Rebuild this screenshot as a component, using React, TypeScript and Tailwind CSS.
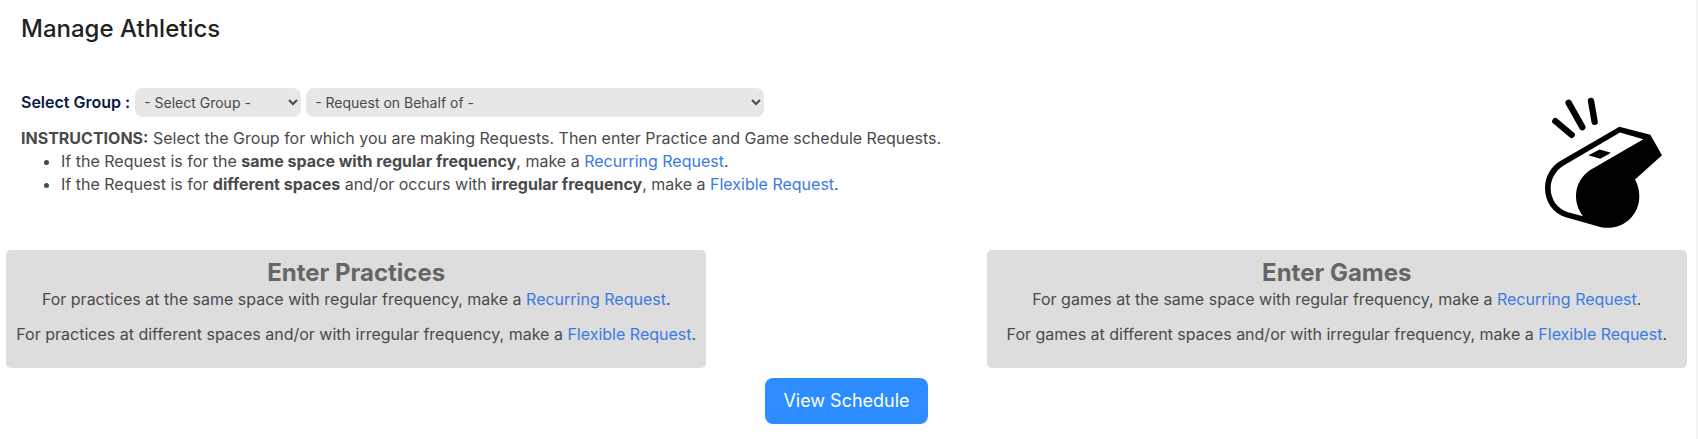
import { useState } from "react";

interface RequestCardProps {
  title: string;
  kind: string;
}

function RequestLink({ children }: { children: string }) {
  return (
    <a href="#" className="text-[#3b7ae4] hover:underline">
      {children}
    </a>
  );
}

function WhistleIcon() {
  return (
    <svg viewBox="75 52 351 392" className="w-[117px] h-[131px]" aria-hidden="true">
      {/* Sound lines */}
      <g stroke="#000" strokeWidth="19" strokeLinecap="round">
        <path d="M106 124 L155 165" />
        <path d="M146 69 L187 142" />
        <path d="M213 63 L224 126" />
      </g>
      {/* Body outline */}
      <path
        d="M298 141 L391 165 L426 226 L345 299 C353 314 358 331 358 349 C358 402 316 444 263 444 C253 444 242 442 233 439 L137 412 C100 400 75 366 75 325 C75 290 93 260 122 243 Z"
        fill="#000"
      />
      {/* Top face */}
      <path
        d="M300 158 L370 178 L212 270 C185 287 168 316 168 349 C168 371 176 392 189 409 L144 397 C113 388 92 359 92 325 C92 297 107 272 131 257 Z"
        fill="#fff"
      />
      <path d="M205 226 L239 209 L273 219 L241 237 Z" fill="#000" />
    </svg>
  );
}

function RequestCard({ title, kind }: RequestCardProps) {
  return (
    <section className="col-span-5 rounded-[5px] bg-[#ddd] pt-2 pb-[22px] text-center">
      <h2 className="text-2xl leading-[30px] font-bold text-[#666]">{title}</h2>
      <p className="mb-3">
        For {kind} at the same space with regular frequency, make a <RequestLink>Recurring Request</RequestLink>.
      </p>
      <p>
        For {kind} at different spaces and/or with irregular frequency, make a <RequestLink>Flexible Request</RequestLink>.
      </p>
    </section>
  );
}

export default function App() {
  const [group, setGroup] = useState("");
  const [behalf, setBehalf] = useState("");

  return (
    <main className="min-h-screen border-r-2 border-[#f2f2f2] bg-white pl-[6px] pr-[9px] font-['Inter',sans-serif] text-base leading-[23px] font-normal text-[#4a4a4a]">
      <h1 className="pt-[13px] pl-[15px] text-2xl leading-8 font-medium text-[#222]">Manage Athletics</h1>

      {/* Group selection and instructions */}
      <div className="flex items-start justify-between pt-[43px] pl-[15px] pr-[25px]">
        <div>
          <div className="flex items-center">
            <label htmlFor="group" className="mr-[5px] font-semibold text-[#071a45]">
              Select Group :
            </label>
            <select
              id="group"
              value={group}
              onChange={(e) => setGroup(e.target.value)}
              className="mr-[5px] h-[29px] w-[166px] rounded-lg bg-[#e7e7e7] px-[5px] text-sm"
            >
              <option value="">- Select Group -</option>
            </select>
            <select
              aria-label="Request on behalf of"
              value={behalf}
              onChange={(e) => setBehalf(e.target.value)}
              className="h-[29px] w-[458px] rounded-lg bg-[#e7e7e7] px-[5px] text-sm"
            >
              <option value="">- Request on Behalf of -</option>
            </select>
          </div>

          <p className="mt-[10px]">
            <b className="font-bold">INSTRUCTIONS:</b> Select the Group for which you are making Requests. Then enter
            Practice and Game schedule Requests.
          </p>
          <ul className="list-disc pl-10">
            <li>
              If the Request is for the <b className="font-bold">same space with regular frequency</b>, make a{" "}
              <RequestLink>Recurring Request</RequestLink>.
            </li>
            <li>
              If the Request is for <b className="font-bold">different spaces</b> and/or occurs with{" "}
              <b className="font-bold">irregular frequency</b>, make a <RequestLink>Flexible Request</RequestLink>.
            </li>
          </ul>
        </div>
        <div className="pt-[9px]">
          <WhistleIcon />
        </div>
      </div>

      {/* Request cards */}
      <div className="mt-[22px] grid grid-cols-12">
        <RequestCard title="Enter Practices" kind="practices" />
        <div className="col-span-2" />
        <RequestCard title="Enter Games" kind="games" />
      </div>

      <div className="flex justify-center pt-[10px]">
        <button className="h-[46px] w-[163px] rounded-lg bg-[#2d8cff] text-lg font-normal text-white">
          View Schedule
        </button>
      </div>
    </main>
  );
}
